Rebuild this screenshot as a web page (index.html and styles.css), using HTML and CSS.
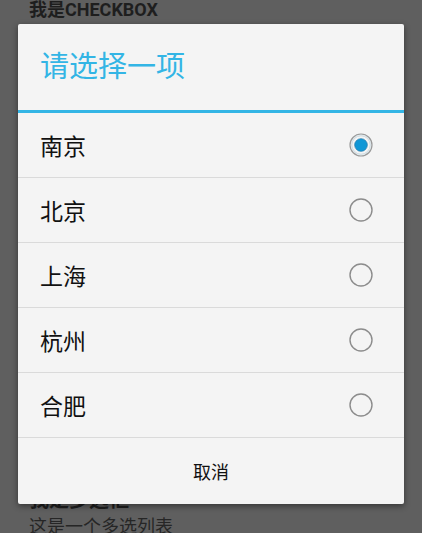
FILE: index.html
```html
<!DOCTYPE html>
<html lang="zh">
<head>
    <meta charset="UTF-8">
    <meta name="viewport" content="width=device-width, initial-scale=1.0">
    <title>Checkbox</title>
    <link rel="stylesheet" href="styles.css">
</head>
<body>
    <div class="page">
        <div class="page-title">我是CHECKBOX</div>
        <div class="page-bottom">
            <div class="page-sub">我是多选框</div>
            <div class="page-text">这是一个多选列表</div>
        </div>
    </div>

    <div class="dialog">
        <div class="dialog-title">请选择一项</div>
        <div class="dialog-line"></div>
        <ul class="choices">
            <li class="choice">
                <span>南京</span>
                <svg class="radio" width="26" height="26" viewBox="0 0 26 26">
                    <circle cx="13" cy="13" r="11" fill="#e6eef2" stroke="#9a9a9a" stroke-width="1.2"/>
                    <circle cx="13" cy="13" r="9.2" fill="#f4f4f4" stroke="#c8d4da" stroke-width="0.8"/>
                    <circle cx="13" cy="13" r="6.3" fill="#0f97d6" stroke="#2a7fae" stroke-width="0.8"/>
                </svg>
            </li>
            <li class="choice">
                <span>北京</span>
                <svg class="radio" width="26" height="26" viewBox="0 0 26 26">
                    <circle cx="13" cy="13" r="11" fill="none" stroke="#8c8c8c" stroke-width="1.4"/>
                </svg>
            </li>
            <li class="choice">
                <span>上海</span>
                <svg class="radio" width="26" height="26" viewBox="0 0 26 26">
                    <circle cx="13" cy="13" r="11" fill="none" stroke="#8c8c8c" stroke-width="1.4"/>
                </svg>
            </li>
            <li class="choice">
                <span>杭州</span>
                <svg class="radio" width="26" height="26" viewBox="0 0 26 26">
                    <circle cx="13" cy="13" r="11" fill="none" stroke="#8c8c8c" stroke-width="1.4"/>
                </svg>
            </li>
            <li class="choice">
                <span>合肥</span>
                <svg class="radio" width="26" height="26" viewBox="0 0 26 26">
                    <circle cx="13" cy="13" r="11" fill="none" stroke="#8c8c8c" stroke-width="1.4"/>
                </svg>
            </li>
        </ul>
        <div class="dialog-footer">取消</div>
    </div>
</body>
</html>
```

FILE: styles.css
```css
body {
    margin: 0;
    width: 422px;
    height: 533px;
    overflow: hidden;
    background-color: #5f5f5f;
    font-family: Roboto, 'Noto Sans CJK SC', sans-serif;
    position: relative;
}

.page {
    height: 533px;
    display: flex;
    flex-direction: column;
    justify-content: space-between;
    padding-left: 29px;
    color: #1e1e1e;
}

.page-title {
    font-size: 18px;
    font-weight: bold;
    line-height: 22px;
    margin-top: -1px;
}

.page-sub {
    font-size: 20px;
    font-weight: bold;
    line-height: 24px;
}

.page-text {
    font-size: 18px;
    line-height: 22px;
    margin-top: 4px;
    margin-bottom: -5px;
    color: #262626;
}

.dialog {
    position: absolute;
    left: 18px;
    top: 24px;
    width: 386px;
    height: 480px;
    background-color: #f4f4f4;
    border-radius: 2px;
    box-shadow: 0 2px 6px rgba(0, 0, 0, 0.45);
    display: flex;
    flex-direction: column;
}

.dialog-title {
    height: 86px;
    display: flex;
    align-items: center;
    padding-left: 22px;
    padding-bottom: 6px;
    font-size: 29px;
    color: #33b5e5;
    box-sizing: border-box;
}

.dialog-line {
    height: 3px;
    background-color: #33b5e5;
}

.choices {
    list-style: none;
    margin: 0;
    padding: 0;
}

.choice {
    height: 64px;
    border-bottom: 1px solid #dadada;
    display: flex;
    align-items: center;
    justify-content: space-between;
    padding: 0 30px 0 22px;
    font-size: 23px;
    color: #111;
}

.radio {
    display: block;
}

.dialog-footer {
    flex: 1;
    display: flex;
    align-items: center;
    justify-content: center;
    font-size: 18px;
    color: #111;
}
```
